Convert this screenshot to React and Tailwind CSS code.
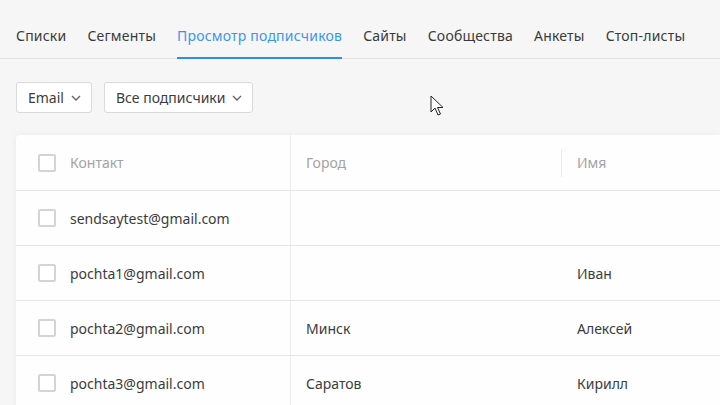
import React from "react";

const tabs = ["Списки", "Сегменты", "Просмотр подписчиков", "Сайты", "Сообщества", "Анкеты", "Стоп-листы"];

const rows = [
  { email: "sendsaytest@gmail.com", city: "", name: "" },
  { email: "pochta1@gmail.com", city: "", name: "Иван" },
  { email: "pochta2@gmail.com", city: "Минск", name: "Алексей" },
  { email: "pochta3@gmail.com", city: "Саратов", name: "Кирилл" },
];

function Chevron() {
  return (
    <svg width="10" height="6" viewBox="0 0 10 6" className="ml-[7px] mt-[1px]">
      <path d="M1 1l4 4 4-4" fill="none" stroke="#666" strokeWidth="1.4" />
    </svg>
  );
}

function Checkbox() {
  return <div className="w-[18px] h-[18px] shrink-0 border-2 border-[#d4d4d4] rounded-[2px] bg-white" />;
}

export default function App() {
  return (
    <div
      className="relative w-[720px] h-[405px] overflow-hidden bg-[#f6f6f6] text-[14px] text-[#3c3c3c]"
      style={{ fontFamily: '"Noto Sans", "Open Sans", sans-serif' }}
    >
      {/* tabs */}
      <div className="flex gap-[21px] pl-4 border-b border-[#e2e2e2] h-[59px] items-end tracking-[0.2px]">
        {tabs.map((t, i) => (
          <div
            key={t}
            className={
              "pt-[25px] pb-[11px] leading-5 -mb-px border-b-2 " +
              (i === 2 ? "border-[#2f8ceb] text-[#3d95ea]" : "border-transparent text-[#3a3a3a]")
            }
          >
            {t}
          </div>
        ))}
      </div>

      {/* filters */}
      <div className="flex gap-3 pl-4 mt-[23px]">
        <div className="flex items-center h-[31px] pl-[11px] pr-[10px] bg-white border border-[#d9d9d9] rounded-[3px]">
          Email
          <Chevron />
        </div>
        <div className="flex items-center h-[31px] pl-[11px] pr-[10px] bg-white border border-[#d9d9d9] rounded-[3px]">
          Все подписчики
          <Chevron />
        </div>
      </div>

      {/* table card */}
      <div className="ml-4 mt-[22px] bg-[#fefefe] rounded-tl-[4px] shadow-[0_0_6px_rgba(0,0,0,0.06)]">
        <div className="flex h-[56px] border-b border-[#e6e6e6] text-[#a3a3a3]">
          <div className="w-[275px] shrink-0 flex items-center pl-[22px] gap-[14px] border-r border-[#ececec]">
            <Checkbox />
            Контакт
          </div>
          <div className="w-[270px] shrink-0 flex items-center pl-[15px]">Город</div>
          <div className="flex items-center">
            <div className="w-px h-[28px] bg-[#ececec]" />
            <span className="pl-[15px]">Имя</span>
          </div>
        </div>
        {rows.map((r) => (
          <div key={r.email} className="flex h-[55px] border-b border-[#e6e6e6]">
            <div className="w-[275px] shrink-0 flex items-center pl-[22px] gap-[14px] border-r border-[#ececec]">
              <Checkbox />
              {r.email}
            </div>
            <div className="w-[270px] shrink-0 flex items-center pl-[15px]">{r.city}</div>
            <div className="flex items-center pl-4">{r.name}</div>
          </div>
        ))}
      </div>

      {/* mouse cursor */}
      <svg className="absolute left-[430px] top-[95px]" width="14" height="22" viewBox="0 0 14 22">
        <path
          d="M1 1v16l4-4 3 7 2.5-1-3-6.5h5.5z"
          fill="#fff"
          stroke="#222"
          strokeWidth="1"
          strokeLinejoin="round"
        />
      </svg>
    </div>
  );
}
